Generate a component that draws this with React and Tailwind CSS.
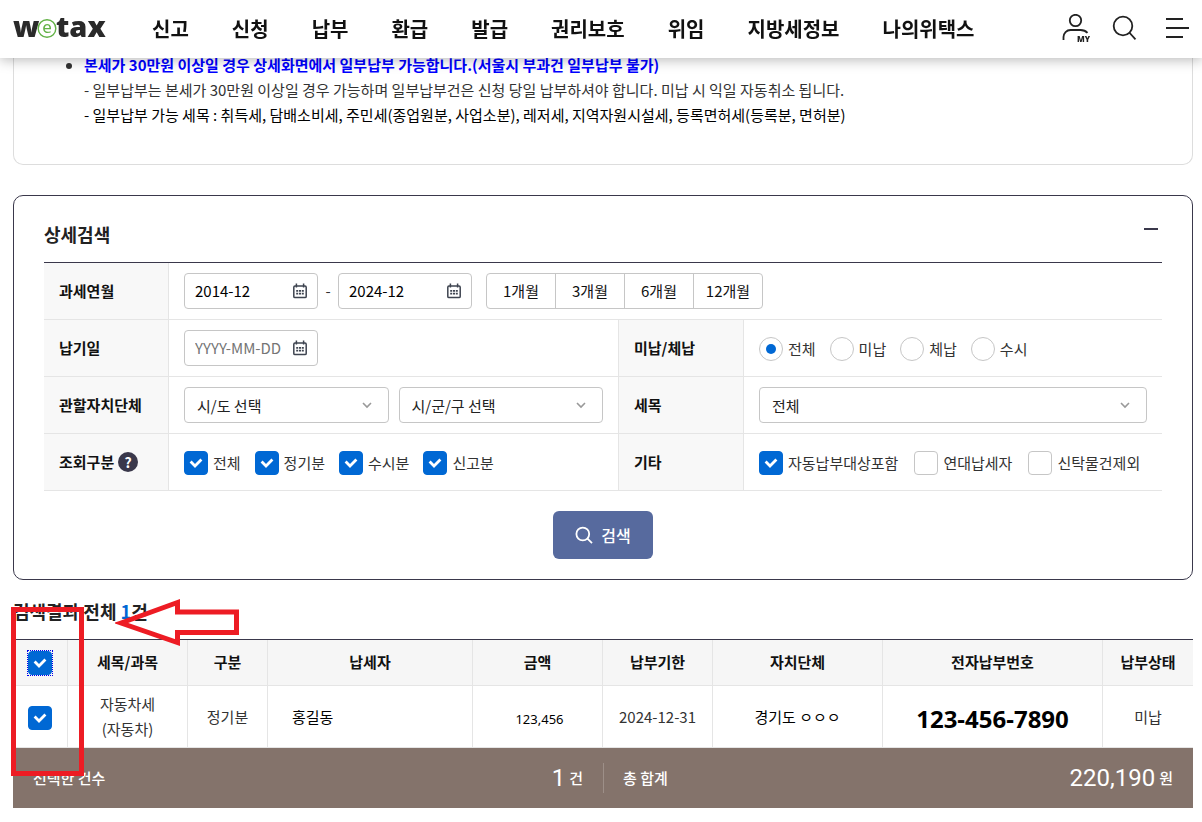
import React, { useState } from 'react';

const menus = ['신고', '신청', '납부', '환급', '발급', '권리보호', '위임', '지방세정보', '나의위택스'];
const periods = ['1개월', '3개월', '6개월', '12개월'];

const CheckBox = ({ id, label, defaultChecked = false, focused = false }) => (
  <span className="flex items-center gap-[5px]">
    <span className={`relative block size-6 ${focused ? 'outline-1 outline-dotted outline-[#0000ee]' : ''}`}>
      <input
        id={id}
        type="checkbox"
        aria-label={label ? undefined : '선택'}
        defaultChecked={defaultChecked}
        className="peer block size-6 appearance-none rounded border border-[#c6c6c6] bg-white checked:border-[#0068d4] checked:bg-[#0068d4]"
      />
      <svg
        className="pointer-events-none absolute inset-0 hidden peer-checked:block"
        width="24"
        height="24"
        viewBox="0 0 24 24"
        fill="none"
        stroke="#fff"
        strokeWidth="2.8"
      >
        <path d="M6.6 10.600l4.400 4.400L17.400 8.600" />
      </svg>
    </span>
    {label && <label htmlFor={id}>{label}</label>}
  </span>
);

const Radio = ({ id, label, defaultChecked = false }) => (
  <span className="flex items-center gap-[5px]">
    <span className="relative block size-6">
      <input
        id={id}
        type="radio"
        name="unpaid"
        defaultChecked={defaultChecked}
        className="peer block size-6 appearance-none rounded-full border border-[#c6c6c6] bg-white"
      />
      <span className="pointer-events-none absolute inset-[7px] hidden rounded-full bg-[#0068d4] peer-checked:block"></span>
    </span>
    <label htmlFor={id}>{label}</label>
  </span>
);

const DateInput = ({ label, value, placeholder }) => (
  <div className="flex h-9 w-[134px] items-center rounded border border-[#c6c6c6] bg-white px-2.5">
    <input
      type="text"
      aria-label={label}
      defaultValue={value}
      placeholder={placeholder}
      className="w-full min-w-0 text-black outline-none placeholder:text-[#757575]"
    />
    <button type="button" aria-label="달력 열기" className="shrink-0">
      <svg width="14" height="16" viewBox="0 0 14 16" fill="none" stroke="#3e4450" strokeWidth="1.5">
        <rect x="0.8" y="3" width="12.4" height="11.6" rx="1.2" />
        <path d="M3.4 0.5v4M10.6 0.5v4" />
        <path d="M3.200 7.800h7.600M3.200 10.600h7.600" strokeDasharray="2 0.8" strokeWidth="1.7" />
      </svg>
    </button>
  </div>
);

const SelectBox = ({ label, option }) => (
  <div className="relative min-w-0 flex-1">
    <select
      aria-label={label}
      className="h-9 w-full appearance-none rounded border border-[#c6c6c6] bg-white pt-0.5 pr-8 pl-3 text-[#222]"
    >
      <option>{option}</option>
    </select>
    <svg
      className="pointer-events-none absolute top-[15px] right-[17px]"
      width="10"
      height="7"
      viewBox="0 0 10 7"
      fill="none"
      stroke="#999"
      strokeWidth="1.6"
    >
      <path d="M1 1l4 4 4-4" />
    </svg>
  </div>
);

const headCell = 'flex h-14 items-center border-r border-[#e5e5e5] bg-[#f8f8f8] pl-[15px] font-bold text-[#111]';
const bodyCell = 'flex h-14 items-center px-[15px] text-[#333]';
const formRow = 'grid grid-cols-[125px_449fr_126px_418fr] border-b border-[#e5e5e5]';

const Header = () => (
  <header className="fixed inset-x-0 top-0 z-20 flex h-[58px] items-center bg-white pr-[9px] pl-[13px] shadow-[0_2px_12px_rgba(0,0,0,0.28)]">
    <a href="#" aria-label="wetax" className="flex w-[139px] shrink-0 items-center">
      <svg width="110" height="46" viewBox="0 0 110 46" className="overflow-visible" fill="#2a2a2a">
        <text x="0" y="31" fontSize="29" fontWeight="800" fontFamily='"Open Sans", sans-serif'>w</text>
        <text x="43" y="31" fontSize="29" fontWeight="800" fontFamily='"Open Sans", sans-serif'>tax</text>
        <circle cx="34" cy="22.500" r="8.800" fill="#fff" stroke="#62b146" strokeWidth="1.4" />
        <text x="34" y="27" fontSize="17" textAnchor="middle" fill="#62b146" fontFamily='"Noto Sans", sans-serif'>e</text>
      </svg>
    </a>
    <nav className="flex flex-1 gap-[43px] text-xl font-bold whitespace-nowrap text-[#111]">
      {menus.map((menu) => (
        <a key={menu} href="#">{menu}</a>
      ))}
    </nav>
    <div className="flex gap-[21px]">
      <button type="button" aria-label="마이페이지">
        <svg width="30" height="30" viewBox="0 0 30 30" fill="none" stroke="#222" strokeWidth="1.8">
          <circle cx="14.5" cy="6.5" r="5.7" />
          <path d="M2.5 26v-3a7 7 0 0 1 7-7h10q4.500 0 7 2.800" />
          <text x="16" y="28" fontSize="8" fontWeight="900" fill="#222" stroke="none" fontFamily='"Noto Sans", sans-serif'>MY</text>
        </svg>
      </button>
      <button type="button" aria-label="검색">
        <svg width="30" height="30" viewBox="0 0 30 30" fill="none" stroke="#222" strokeWidth="1.8">
          <circle cx="11" cy="12" r="9.3" />
          <path d="M17.300 18.500l6.200 6.800" />
        </svg>
      </button>
      <button type="button" aria-label="전체메뉴">
        <svg width="30" height="30" viewBox="0 0 30 30" stroke="#222" strokeWidth="2">
          <path d="M3 5h17M3 14h23M3 23h17" />
        </svg>
      </button>
    </div>
  </header>
);

const Notice = () => (
  <section className="rounded-b-[10px] border border-t-0 border-[#ddd] pt-[52px] pb-[37px] pl-[70px] leading-[25px]">
    <ul>
      <li className="relative font-bold text-[#0000ff]">
        <span className="absolute top-[11px] -left-[18px] size-1.5 rounded-full bg-[#333]"></span>
        본세가 30만원 이상일 경우 상세화면에서 일부납부 가능합니다.(서울시 부과건 일부납부 불가)
      </li>
    </ul>
    <p className="text-[#333]">- 일부납부는 본세가 30만원 이상일 경우 가능하며 일부납부건은 신청 당일 납부하셔야 합니다. 미납 시 익일 자동취소 됩니다.</p>
    <p className="text-black">- 일부납부 가능 세목 : 취득세, 담배소비세, 주민세(종업원분, 사업소분), 레저세, 지역자원시설세, 등록면허세(등록분, 면허분)</p>
  </section>
);

const SearchForm = () => {
  const [open, setOpen] = useState(true);

  return (
    <section className="mt-[30px] rounded-[10px] border border-[#3a384b] px-[30px] pb-5">
      <div className="flex h-[66px] items-center justify-between pr-1">
        <h2 className="pt-2.5 text-lg font-bold text-[#222]">상세검색</h2>
        <button type="button" aria-label="접기" onClick={() => setOpen(!open)}>
          <svg width="14" height="14" viewBox="0 0 14 14" stroke="#3a384b" strokeWidth="2">
            <path d="M0 7h14" />
          </svg>
        </button>
      </div>
      {open && (
        <form onSubmit={(e) => e.preventDefault()}>
          <div className="border-t border-[#3a384b]">
            <div className="grid grid-cols-[125px_1fr] border-b border-[#e5e5e5]">
              <div className={headCell}>과세연월</div>
              <div className={bodyCell}>
                <DateInput label="시작 연월" value="2014-12" />
                <span className="w-5 text-center">-</span>
                <DateInput label="종료 연월" value="2024-12" />
                <div className="ml-3.5 flex h-9 w-[277px] divide-x divide-[#c6c6c6] rounded border border-[#c6c6c6] text-[#111]">
                  {periods.map((period) => (
                    <button key={period} type="button" className="flex-1">{period}</button>
                  ))}
                </div>
              </div>
            </div>
            <div className={formRow}>
              <div className={headCell}>납기일</div>
              <div className={bodyCell}>
                <DateInput label="납기일" placeholder="YYYY-MM-DD" />
              </div>
              <div className={`${headCell} border-l`}>미납/체납</div>
              <div className={`${bodyCell} gap-3.5 pt-0.5`}>
                <Radio id="unpaid-all" label="전체" defaultChecked />
                <Radio id="unpaid-due" label="미납" />
                <Radio id="unpaid-overdue" label="체납" />
                <Radio id="unpaid-any" label="수시" />
              </div>
            </div>
            <div className={formRow}>
              <div className={headCell}>관할자치단체</div>
              <div className={`${bodyCell} gap-2.5`}>
                <SelectBox label="시/도" option="시/도 선택" />
                <SelectBox label="시/군/구" option="시/군/구 선택" />
              </div>
              <div className={`${headCell} border-l`}>세목</div>
              <div className={bodyCell}>
                <SelectBox label="세목" option="전체" />
              </div>
            </div>
            <div className={formRow}>
              <div className={headCell}>
                조회구분
                <button
                  type="button"
                  aria-label="도움말"
                  className="ml-1 flex size-5 items-center justify-center rounded-full bg-[#3a384b] text-sm text-white"
                >
                  ?
                </button>
              </div>
              <div className={`${bodyCell} gap-3.5 pt-0.5`}>
                <CheckBox id="kind-all" label="전체" defaultChecked />
                <CheckBox id="kind-regular" label="정기분" defaultChecked />
                <CheckBox id="kind-any" label="수시분" defaultChecked />
                <CheckBox id="kind-report" label="신고분" defaultChecked />
              </div>
              <div className={`${headCell} border-l`}>기타</div>
              <div className={`${bodyCell} gap-4 pt-0.5 whitespace-nowrap`}>
                <CheckBox id="etc-auto" label="자동납부대상포함" defaultChecked />
                <CheckBox id="etc-joint" label="연대납세자" />
                <CheckBox id="etc-trust" label="신탁물건제외" />
              </div>
            </div>
          </div>
          <button
            type="submit"
            className="mx-auto mt-5 flex h-12 w-[100px] items-center justify-center gap-2 rounded-md bg-[#576a9e] text-base font-medium text-white"
          >
            <svg width="18" height="18" viewBox="0 0 18 18" fill="none" stroke="#fff" strokeWidth="1.8">
              <circle cx="7.8" cy="8" r="6.4" />
              <path d="M12.500 12.700l4.500 4.500" />
            </svg>
            검색
          </button>
        </form>
      )}
    </section>
  );
};

const columns = [
  { name: '세목/과목', width: 'w-[120px]' },
  { name: '구분', width: 'w-20' },
  { name: '납세자', width: 'w-[205px]' },
  { name: '금액', width: 'w-[130px]' },
  { name: '납부기한', width: 'w-[110px]' },
  { name: '자치단체', width: 'w-[170px]' },
  { name: '전자납부번호', width: 'w-[220px]' },
  { name: '납부상태', width: 'w-[90px]' }
];

const Results = () => {
  const td = 'border-r border-b border-[#e5e5e5] text-center last:border-r-0';

  return (
    <section className="relative">
      <h2 className="pt-[17px] pb-3.5 text-lg leading-7 font-bold text-[#222]">
        검색결과 전체 <span className="text-[#0068d4]">1</span>건
      </h2>
      <table className="w-full table-fixed border-separate border-spacing-0 border-t border-[#3a384b] text-[#333]">
        <thead>
          <tr className="h-[46px] bg-[#f6f6f6] text-[#111]">
            <th className="w-[55px] border-r border-b border-[#e5e5e5]">
              <div className="flex justify-center"><CheckBox id="row-all" defaultChecked focused /></div>
            </th>
            {columns.map((col) => (
              <th key={col.name} className={`${col.width} ${td} pb-0.5`}>{col.name}</th>
            ))}
          </tr>
        </thead>
        <tbody>
          <tr className="h-[62px]">
            <td className={`${td} pt-0.5`}>
              <div className="flex justify-center"><CheckBox id="row-1" defaultChecked /></div>
            </td>
            <td className={`${td} pb-0.5 leading-[25px]`}>자동차세<br />(자동차)</td>
            <td className={td}>정기분</td>
            <td className="border-r border-b border-[#e5e5e5] pl-6 text-left text-black">홍길동</td>
            <td className={`${td} pt-1 pl-1 font-['Noto_Sans'] text-[13px] text-black`}>123,456</td>
            <td className={td}>2024-12-31</td>
            <td className={`${td} text-black`}>경기도 ㅇㅇㅇ</td>
            <td className={`${td} pt-1 font-['Noto_Sans'] text-2xl font-bold text-black`}>123-456-7890</td>
            <td className={td}>미납</td>
          </tr>
        </tbody>
      </table>
      <div className="grid h-15 grid-cols-2 items-center bg-[#84736b] font-medium text-white">
        <div className="flex h-[30px] items-center justify-between px-5">
          <span>선택한 건수</span>
          <span className="flex items-center gap-1">
            <strong className="font-[Roboto] text-2xl font-normal">1</strong>건
          </span>
        </div>
        <div className="flex h-[30px] items-center justify-between border-l border-[#9d8f88] pr-5 pl-[19px]">
          <span>총 합계</span>
          <span className="flex items-center gap-1">
            <strong className="font-[Roboto] text-2xl font-normal">220,190</strong>원
          </span>
        </div>
      </div>

      {/* guide marks over the select column */}
      <div className="pointer-events-none absolute top-[27px] -left-0.5 h-[169px] w-[73px] border-[5px] border-[#ed1c24]"></div>
      <svg
        className="pointer-events-none absolute top-[18px] left-[102px]"
        width="126"
        height="50"
        viewBox="0 0 126 50"
        fill="none"
        stroke="#ed1c24"
        strokeWidth="5"
      >
        <path d="M6 25L62.500 4.500V14H121.500V34.500H62.500V44.500Z" />
      </svg>
    </section>
  );
};

export default function App() {
  return (
    <div className="min-h-screen bg-white font-['Noto_Sans_CJK_KR',sans-serif] text-[15px] leading-[22px]">
      <Header />
      <main className="pr-[9px] pb-3.5 pl-[13px]">
        <Notice />
        <SearchForm />
        <Results />
      </main>
    </div>
  );
}
